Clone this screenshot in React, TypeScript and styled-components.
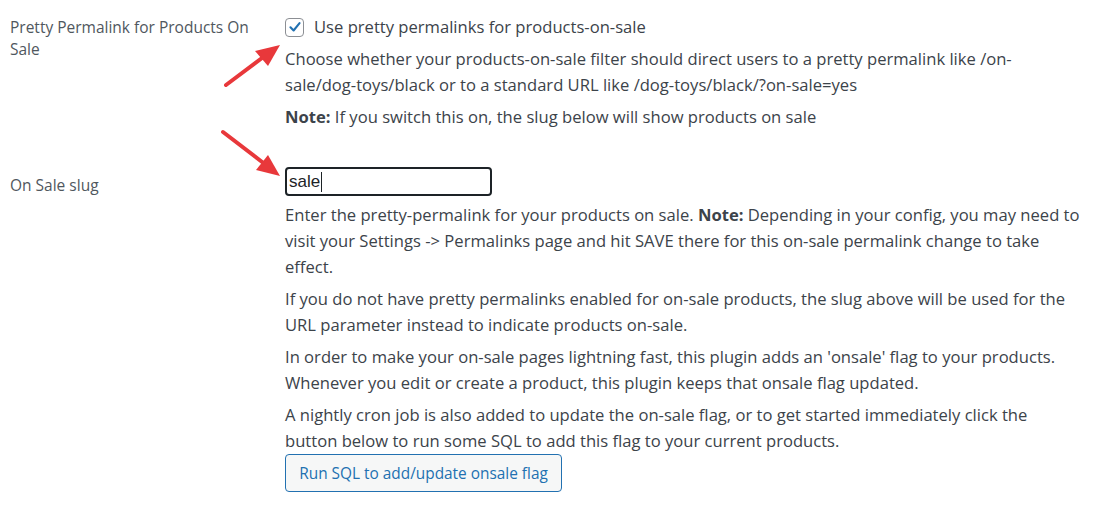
import React from "react";
import styled, { createGlobalStyle } from "styled-components";

const Global = createGlobalStyle`
  html, body { margin: 0; padding: 0; background: #fff; }
  body { font-family: "Open Sans", "Noto Sans", sans-serif; }
  * { box-sizing: border-box; }
`;

const Page = styled.div`
  position: relative;
  width: 1093px;
  height: 507px;
  padding: 14px 0 0 10px;
  overflow: hidden;
`;

const Row = styled.div<{ $top?: number }>`
  display: grid;
  grid-template-columns: 275px 797px;
  margin-top: ${(p) => p.$top ?? 0}px;
`;

const Label = styled.div<{ $pad?: number }>`
  color: #50575e;
  font-size: 15.5px;
  line-height: 22px;
  padding-top: ${(p) => p.$pad ?? 2}px;
  padding-right: 20px;
`;

const Field = styled.div`
  color: #3c434a;
  font-size: 16.6px;
  line-height: 26px;
`;

const CheckLine = styled.label`
  display: flex;
  align-items: center;
  gap: 10px;
  height: 26px;
`;

const Box = styled.span`
  width: 19px;
  height: 19px;
  border: 1px solid #8c8f94;
  border-radius: 4px;
  display: flex;
  align-items: center;
  justify-content: center;
  background: #fff;
`;

const Para = styled.p`
  margin: 6px 0 0;
`;

const Input = styled.div`
  width: 207px;
  height: 29px;
  border: 2px solid #1d2327;
  border-radius: 4px;
  padding: 0 2px;
  display: flex;
  align-items: center;
  font-family: "Liberation Sans", sans-serif;
  font-size: 17px;
  color: #1d2327;
`;

const Caret = styled.span`
  display: inline-block;
  width: 1px;
  height: 20px;
  background: #1d2327;
  margin-left: 1px;
`;

const Button = styled.button`
  margin-top: 0;
  height: 38px;
  width: 277px;
  border: 1px solid #2271b1;
  border-radius: 4px;
  background: #f6f7f7;
  color: #2271b1;
  font-family: inherit;
  font-size: 15.4px;
  padding: 0 12px;
  display: block;
`;

const Arrows = styled.svg`
  position: absolute;
  left: 0;
  top: 0;
  pointer-events: none;
`;

export default function App() {
  return (
    <>
      <Global />
      <Page>
        <Row>
          <Label>Pretty Permalink for Products On Sale</Label>
          <Field>
            <CheckLine>
              <Box>
                <svg width="14" height="14" viewBox="0 0 20 20">
                  <path d="M3.5 10.5 L8 15 L16.5 4.5" fill="none" stroke="#2271b1" strokeWidth="3" strokeLinecap="round" strokeLinejoin="round" />
                </svg>
              </Box>
              Use pretty permalinks for products-on-sale
            </CheckLine>
            <Para>
              Choose whether your products-on-sale filter should direct users to a pretty permalink like /on-sale/dog-toys/black or to a standard URL like /dog-toys/black/?on-sale=yes
            </Para>
            <Para>
              <b>Note:</b> If you switch this on, the slug below will show products on sale
            </Para>
          </Field>
        </Row>
        <Row $top={37}>
          <Label $pad={7}>On Sale slug</Label>
          <Field>
            <Input>
              sale<Caret />
            </Input>
            <Para>
              Enter the pretty-permalink for your products on sale. <b>Note:</b> Depending in your config, you may need to visit your Settings -&gt; Permalinks page and hit SAVE there for this on-sale permalink change to take effect.
            </Para>
            <Para>
              If you do not have pretty permalinks enabled for on-sale products, the slug above will be used for the URL parameter instead to indicate products on-sale.
            </Para>
            <Para>
              In order to make your on-sale pages lightning fast, this plugin adds an 'onsale' flag to your products. Whenever you edit or create a product, this plugin keeps that onsale flag updated.
            </Para>
            <Para>
              A nightly cron job is also added to update the on-sale flag, or to get started immediately click the button below to run some SQL to add this flag to your current products.
            </Para>
            <Button>Run SQL to add/update onsale flag</Button>
          </Field>
        </Row>
        <Arrows width="1093" height="507" viewBox="0 0 1093 507">
          <line x1="226" y1="85" x2="266" y2="55" stroke="#e8383b" strokeWidth="4" strokeLinecap="round" />
          <polygon points="280,45 255,51 268,66" fill="#e8383b" />
          <line x1="223" y1="132" x2="266" y2="165" stroke="#e8383b" strokeWidth="4" strokeLinecap="round" />
          <polygon points="280,176 256,170 268,155" fill="#e8383b" />
        </Arrows>
      </Page>
    </>
  );
}
